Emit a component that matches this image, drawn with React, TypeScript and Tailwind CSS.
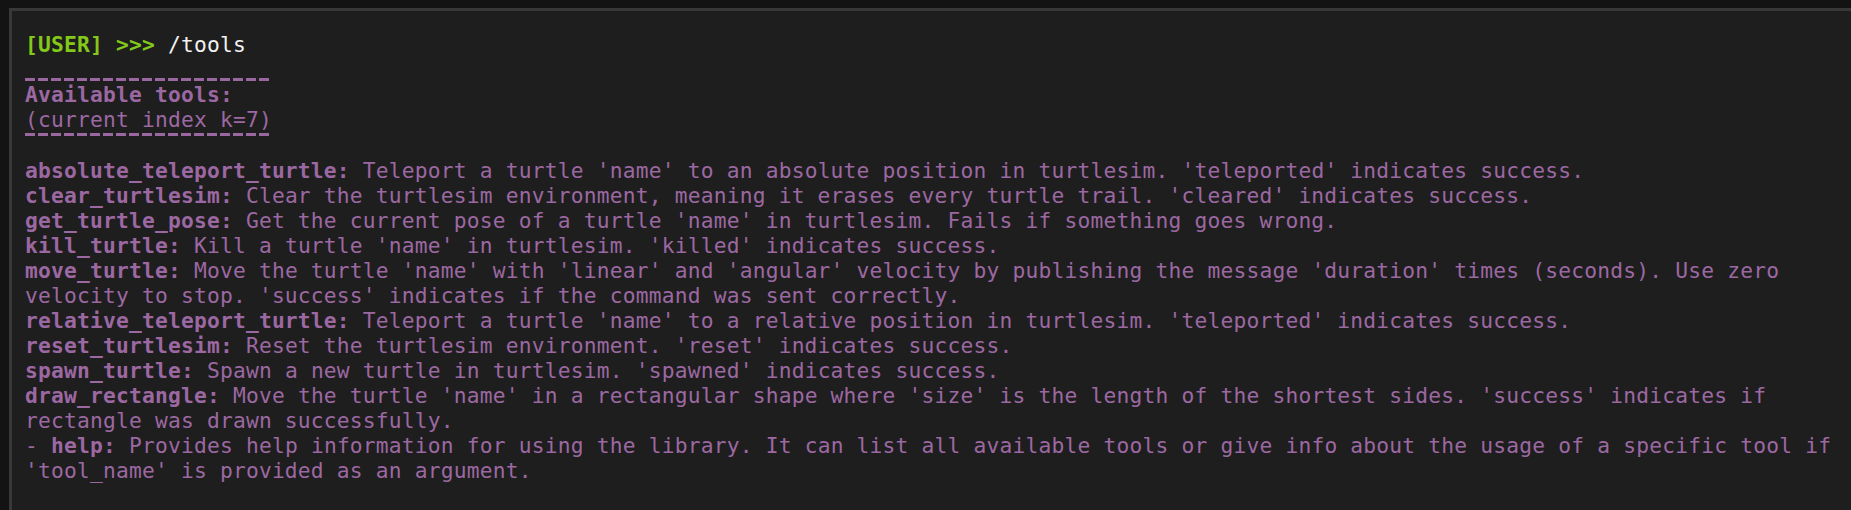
const tools: { name: string; lines: string[]; prefix?: string }[] = [
  {
    name: 'absolute_teleport_turtle',
    lines: [" Teleport a turtle 'name' to an absolute position in turtlesim. 'teleported' indicates success."],
  },
  {
    name: 'clear_turtlesim',
    lines: [" Clear the turtlesim environment, meaning it erases every turtle trail. 'cleared' indicates success."],
  },
  {
    name: 'get_turtle_pose',
    lines: [" Get the current pose of a turtle 'name' in turtlesim. Fails if something goes wrong."],
  },
  {
    name: 'kill_turtle',
    lines: [" Kill a turtle 'name' in turtlesim. 'killed' indicates success."],
  },
  {
    name: 'move_turtle',
    lines: [
      " Move the turtle 'name' with 'linear' and 'angular' velocity by publishing the message 'duration' times (seconds). Use zero",
      "velocity to stop. 'success' indicates if the command was sent correctly.",
    ],
  },
  {
    name: 'relative_teleport_turtle',
    lines: [" Teleport a turtle 'name' to a relative position in turtlesim. 'teleported' indicates success."],
  },
  {
    name: 'reset_turtlesim',
    lines: [" Reset the turtlesim environment. 'reset' indicates success."],
  },
  {
    name: 'spawn_turtle',
    lines: [" Spawn a new turtle in turtlesim. 'spawned' indicates success."],
  },
  {
    name: 'draw_rectangle',
    lines: [
      " Move the turtle 'name' in a rectangular shape where 'size' is the length of the shortest sides. 'success' indicates if",
      'rectangle was drawn successfully.',
    ],
  },
  {
    name: 'help',
    prefix: '- ',
    lines: [
      ' Provides help information for using the library. It can list all available tools or give info about the usage of a specific tool if',
      "'tool_name' is provided as an argument.",
    ],
  },
];

function Dashes() {
  return (
    <div className="h-[3px] w-[247px] bg-[repeating-linear-gradient(90deg,#9a67a0_0_10px,transparent_10px_13px)]" />
  );
}

export default function App() {
  return (
    <div className="h-[510px] w-full overflow-hidden bg-[#131313] pl-[9px] pt-[8px]">
      <div className="h-full border-l-[3px] border-t-[3px] border-[#383838] bg-[#1e1e1e] pl-[13px] pt-[21px] font-['DejaVu_Sans_Mono',monospace] text-[21.25px] leading-[25px] tracking-[0.2px] text-[#9c68a2]">
        <div className="whitespace-pre">
          <span className="font-bold text-[#84c91a]">[USER] &gt;&gt;&gt;</span>
          <span className="text-[#f2f2f2]"> /tools</span>
        </div>
        <div className="mt-[21px]">
          <Dashes />
        </div>
        <div className="mt-[1px] whitespace-pre font-bold">Available tools:</div>
        <div className="whitespace-pre">(current index k=7)</div>
        <div className="mt-[1px]">
          <Dashes />
        </div>
        <div className="mt-[22px]">
          {tools.map((tool) => (
            <div key={tool.name}>
              {tool.lines.map((line, i) => (
                <div key={i} className="whitespace-pre">
                  {i === 0 ? (
                    <>
                      {tool.prefix}
                      <span className="font-bold">{tool.name}:</span>
                      {line}
                    </>
                  ) : (
                    line
                  )}
                </div>
              ))}
            </div>
          ))}
        </div>
      </div>
    </div>
  );
}
